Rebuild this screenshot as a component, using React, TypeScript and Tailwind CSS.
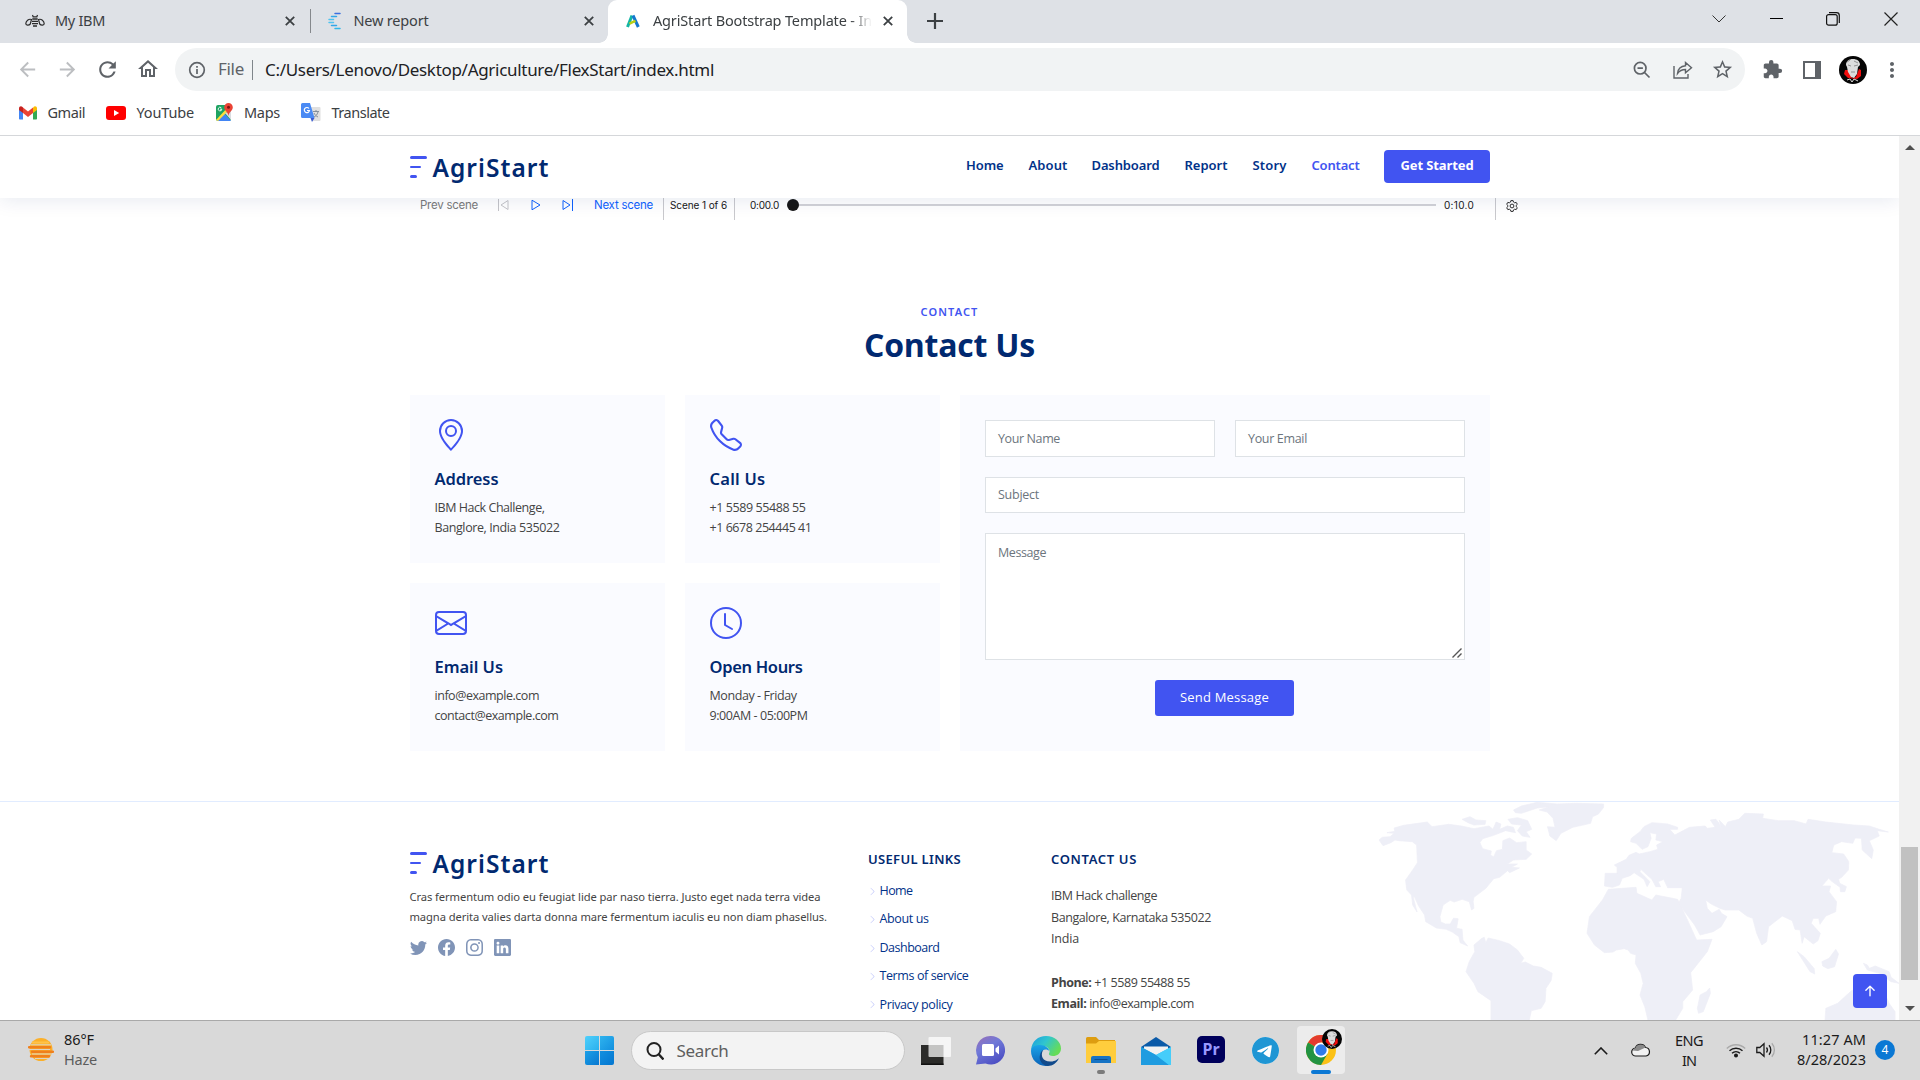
import { useLayoutEffect, useRef } from "react";
import type { ReactNode } from "react";
import clsx from "clsx";
import {
  BsGeoAlt, BsTelephone, BsEnvelope, BsClock, BsTwitter, BsFacebook, BsInstagram, BsLinkedin,
  BsChevronRight, BsArrowUpShort, BsTelegram,
} from "react-icons/bs";
import { MdArrowBack, MdArrowForward, MdRefresh, MdOutlineHome, MdExtension, MdStarBorder, MdMoreVert } from "react-icons/md";

/* One line of text, tracked so that it fills the width of its box. */
function Line({ children, className }: { children: ReactNode; className?: string }) {
  const box = useRef<HTMLSpanElement>(null);
  const text = useRef<HTMLSpanElement>(null);
  useLayoutEffect(() => {
    const b = box.current;
    const t = text.current;
    if (!b || !t) return;
    t.style.letterSpacing = "0px";
    const n = (t.textContent ?? "").length;
    const gap = b.getBoundingClientRect().width - t.getBoundingClientRect().width;
    t.style.letterSpacing = `${gap / Math.max(1, n)}px`;
  });
  return (
    <span ref={box} className={clsx("block shrink-0 whitespace-nowrap", className)}>
      <span ref={text}>{children}</span>
    </span>
  );
}

function Cross({ className }: { className?: string }) {
  return (
    <svg viewBox="0 0 10 10" className={clsx("h-2.5 w-2.5 shrink-0", className)} fill="none" stroke="#3c4043" strokeWidth="1.8">
      <path d="M.8.8l8.4 8.4M9.2.8L.8 9.2" />
    </svg>
  );
}

function Avatar({ className }: { className?: string }) {
  return (
    <svg viewBox="0 0 28 28" className={clsx("shrink-0", className)}>
      <circle cx="14" cy="14" r="14" fill="#050505" />
      <path d="M6 14l3 0 4 8 4-1 3-8 2 1 0 6-4 3-9-1-4-4z" fill="#f20d0d" />
      <path d="M7 9c0-4 3-6 7-6s7 2 7 6l-2 2-1 7-3 4-3-1-3-5-1-5z" fill="#dcdcdc" />
      <path d="M9 9l3 1M15 10l4-1M12 16h4M8 6l3-2M15 5l4 2" stroke="#888" strokeWidth=".9" />
      <path d="M8 24l3-1 2 3 2-3 4 2" stroke="#ddd" strokeWidth="1" fill="none" />
    </svg>
  );
}

function TabStrip() {
  return (
    <div className="flex h-[43px] shrink-0 bg-[#dee1e6] text-[14.5px] leading-[40px] text-[#3c4043]">
      <div className="flex h-[42px] w-[310px] items-center pl-[25px]">
        <svg viewBox="0 0 20 14" className="h-3.5 w-5 shrink-0" fill="none" stroke="#2b2b2b">
          <path d="M6.500 5.500C3.500 4.500 1 7 .8 9.500c0 2 3 2.300 4.500.5zM13.500 5.500c3-1 5.500 1.500 5.700 4 0 2-3 2.300-4.500.5z" strokeWidth="1.200" />
          <path d="M7.300 5h5.400M7 7.400h6M7 9.700h6M8 12h4" strokeWidth="1.300" />
          <path d="M8.300 3.200L7.500 1M11.700 3.200l.8-2.200M8 2.800h4" strokeWidth="1.200" />
        </svg>
        <Line className="mb-[2px] ml-[10px] w-[50px]">My IBM</Line>
        <Cross className="ml-[180px]" />
      </div>
      <div className="flex h-[42px] w-[298px] items-center">
        <div className="h-6 w-px bg-[#85888c]" />
        <svg viewBox="0 0 14 18" className="ml-[17px] h-[18px] w-3.5 shrink-0" fill="none" strokeWidth="1.500" strokeLinecap="round">
          <path d="M7 1.500h5" stroke="#3b6fe0" /><path d="M3.500 4.500h5" stroke="#31a6e8" /><path d="M1 7.500h4.500" stroke="#4fc3f0" />
          <path d="M1 10.500h4.500" stroke="#4fc3f0" /><path d="M3.500 13.500h5" stroke="#31a6e8" /><path d="M7 16.500h5" stroke="#31b6e8" />
        </svg>
        <Line className="mb-[2px] ml-[11.500px] w-[75px]">New report</Line>
        <Cross className="ml-[155px]" />
      </div>
      <div className="relative flex h-[43px] w-[299px] items-center rounded-t-[9px] bg-white pb-px pl-[18px]">
        <div className="absolute bottom-0 -left-[9px] h-[9px] w-[9px] bg-[radial-gradient(circle_at_0_0,#dee1e6_8.500px,#fff_9px)]" />
        <div className="absolute -right-[9px] bottom-0 h-[9px] w-[9px] bg-[radial-gradient(circle_at_100%_0,#dee1e6_8.500px,#fff_9px)]" />
        <svg viewBox="0 0 14 14" className="h-3.5 w-3.5 shrink-0" fill="none" strokeWidth="3">
          <path d="M1.500 13L6 1.500" stroke="#13b5a5" /><path d="M7 1.500L12.300 13" stroke="#1377cf" /><path d="M3.500 9.800c3-2 4-2 6-3" stroke="#b9cf17" strokeWidth="2.500" />
        </svg>
        <div className="mb-[2px] ml-[13px] w-[219px] [mask-image:linear-gradient(90deg,#000_90%,transparent)]">
          <Line className="w-[219px]">AgriStart Bootstrap Template - In</Line>
        </div>
        <Cross className="ml-[11px]" />
      </div>
      <svg viewBox="0 0 16 16" className="mt-[13px] ml-5 h-4 w-4 shrink-0" stroke="#3c4043" strokeWidth="2.200"><path d="M8 0v16M0 8h16" /></svg>
      <div className="ml-auto flex h-[37px] items-center pr-[22px]">
        <svg viewBox="0 0 14 8" className="mr-[44px] h-2 w-3.5" fill="none" stroke="#333"><path d="M.5.5L7 7 13.500.5" /></svg>
        <div className="mr-[43px] h-px w-[13px] bg-black" />
        <svg viewBox="0 0 14 14" className="mr-[44px] h-3.5 w-3.5" fill="none" stroke="#111" strokeWidth="1.200">
          <rect x=".6" y="2.600" width="10.600" height="10.600" rx="2" /><path d="M3 .7h7.500a2.800 2.800 0 012.800 2.800V11" />
        </svg>
        <svg viewBox="0 0 14 14" className="h-3.5 w-3.5" stroke="#222" strokeWidth="1.200"><path d="M.5.5l13 13M13.500.5l-13 13" /></svg>
      </div>
    </div>
  );
}

function Toolbar() {
  return (
    <div className="flex h-[53px] shrink-0 items-center pl-[16px] text-[17px] text-[#5f6368]">
      <MdArrowBack className="h-[23px] w-[23px] text-[#bcbec1]" />
      <MdArrowForward className="ml-[17px] h-[23px] w-[23px] text-[#bcbec1]" />
      <MdRefresh className="ml-[16px] h-[25px] w-[25px]" />
      <MdOutlineHome className="mb-px ml-[15.500px] h-[24px] w-[24px]" />
      <div className="ml-[15.500px] flex h-[43px] w-[1570px] items-center rounded-full bg-[#f1f3f4] pl-[13px]">
        <svg viewBox="0 0 18 18" className="h-[18px] w-[18px]" fill="none" stroke="#5f6368" strokeWidth="1.700">
          <circle cx="9" cy="9" r="7.300" /><path d="M9 8v5M9 5v1.800" />
        </svg>
        <Line className="mb-px ml-[12px] w-[26px]">File</Line>
        <div className="ml-[8px] h-5 w-px bg-[#80868b]" />
        <Line className="ml-[12px] w-[449px] text-[#202124]">C:/Users/Lenovo/Desktop/Agriculture/FlexStart/index.html</Line>
        <svg viewBox="0 0 18 18" className="ml-auto h-[18px] w-[18px]" fill="none" stroke="#5f6368" strokeWidth="1.700">
          <circle cx="7.200" cy="7.200" r="5.800" /><path d="M11.500 11.500l5 5M4.500 7.200h5.400" />
        </svg>
        <svg viewBox="0 0 20 18" className="ml-[22px] h-[18px] w-5" fill="none" stroke="#5f6368" strokeWidth="1.400">
          <path d="M1 5v12h14v-4" /><path d="M4.500 12.500C5 7.500 8 5.200 12.500 4.800V1.500l6 5.200-6 5.100V8.500c-3.500 0-6 1.200-8 4z" />
        </svg>
        <MdStarBorder className="mr-[11px] ml-[18px] h-[23px] w-[23px]" />
      </div>
      <MdExtension className="ml-[17px] h-[21px] w-[21px]" />
      <div className="ml-[20px] h-[18px] w-[18px] border-2 border-r-[6px] border-[#5f6368]" />
      <Avatar className="ml-[18px] h-7 w-7" />
      <MdMoreVert className="ml-[13px] h-6 w-6" />
    </div>
  );
}

function Bookmarks() {
  return (
    <div className="flex h-[40px] shrink-0 items-center border-b border-[#d5d7da] pb-[6px] pl-[19px] text-[14.5px] leading-[24px] text-[#3c4043]">
      <svg viewBox="0 0 18 14" className="h-3.5 w-[18px] shrink-0">
        <path d="M0 2v10.500c0 .6.500 1 1 1h3V6z" fill="#4285f4" /><path d="M18 2v10.500c0 .6-.5 1-1 1h-3V6z" fill="#34a853" />
        <path d="M14 2v5l4-3V2.500C18 .5 16-.3 14.500 1z" fill="#fbbc04" /><path d="M4 7V1.500l5 4 5-4V7l-5 4z" fill="#ea4335" /><path d="M0 4l4 3V1.500L3.500 1C2-.3 0 .5 0 2.500z" fill="#c5221f" />
      </svg>
      <Line className="mb-px ml-[10.500px] w-[37.500px]">Gmail</Line>
      <svg viewBox="0 0 20 14" className="ml-[21px] h-3.5 w-5 shrink-0"><rect width="20" height="14" rx="3" fill="#f00" /><path d="M8 4l5.200 3L8 10z" fill="#fff" /></svg>
      <Line className="mb-px ml-[10.500px] w-[57.500px]">YouTube</Line>
      <svg viewBox="0 0 19 19" className="ml-[21px] h-[19px] w-[19px] shrink-0">
        <rect x="1" y="2" width="15" height="16" rx="2" fill="#1ea362" /><path d="M2 18L9 10l7 8z" fill="#4285f4" /><path d="M1 17L14 3l2 2L3 18z" fill="#fddd3a" />
        <path d="M10 10l6 7V8z" fill="#dadce0" /><path d="M13.500 0a4.300 4.300 0 00-4.300 4.300C9.200 8 13 8.500 13.500 13c.5-4.500 4.300-5 4.300-8.700A4.300 4.300 0 0013.500 0z" fill="#ea4335" /><circle cx="13.500" cy="4.300" r="1.500" fill="#811411" />
        <path d="M6.300 4.800a1.800 1.800 0 10.500 1.400H5" fill="none" stroke="#fff" strokeWidth=".9" />
      </svg>
      <Line className="mb-px ml-[10px] w-[36px]">Maps</Line>
      <svg viewBox="0 0 20 19" className="ml-[21px] h-[19px] w-5 shrink-0">
        <path d="M7 4h11.500a1 1 0 011 1v12a1 1 0 01-1 1H11z" fill="#e0e0e0" /><path d="M1.500 0H9l4.500 15H1.500A1.500 1.500 0 010 13.500v-12A1.500 1.500 0 011.500 0z" fill="#4a8af4" /><path d="M9.500 15h4L11 19z" fill="#3a5bd0" />
        <path d="M8 5.500a2.600 2.600 0 10.500 2H6" fill="none" stroke="#fff" strokeWidth="1.200" /><path d="M12 8.500h6M15 7v1.500M17 9c-1 3-2 4-4 5M13 10c1 2 2 3 4 4" fill="none" stroke="#7b8794" strokeWidth=".9" />
      </svg>
      <Line className="mb-px ml-[10.500px] w-[58px]">Translate</Line>
    </div>
  );
}

function Logo() {
  return (
    <div className="flex items-start font-['Noto_Sans']">
      <div className="flex w-[18px] flex-col gap-[7px] pt-px">
        <div className="h-[2.500px] w-[17px] rounded-full bg-[#4154f1]" />
        <div className="h-[2.500px] w-[11px] rounded-full bg-[#4154f1]" />
        <div className="h-[2.500px] w-[7px] rounded-full bg-[#4154f1]" />
      </div>
      <Line className="ml-[5px] w-[117px] text-[24.500px] leading-[25px] font-semibold text-[#012970]">AgriStart</Line>
    </div>
  );
}

function SiteHeader() {
  return (
    <header className="relative z-10 flex h-[62px] shrink-0 bg-white pl-[409.500px] font-['Noto_Sans'] text-[13px] font-semibold text-[#013289] shadow-[0_2px_20px_rgba(1,41,112,0.1)]">
      <div className="w-[556.500px] pt-[19px]"><Logo /></div>
      <nav className="flex h-[59px] items-center">
        <Line className="w-[37.500px]">Home</Line>
        <Line className="ml-[25px] w-[39px]">About</Line>
        <Line className="ml-[24px] w-[68px]">Dashboard</Line>
        <Line className="ml-[25px] w-[43px]">Report</Line>
        <Line className="ml-[25px] w-[34px]">Story</Line>
        <Line className="ml-[25px] w-[48px] text-[#4154f1]">Contact</Line>
        <button className="mt-[2px] ml-[24.500px] flex h-[33px] w-[106px] items-center justify-center rounded bg-[#4154f1] pb-[2px] font-bold text-white">
          <Line className="w-[73px]">Get Started</Line>
        </button>
      </nav>
    </header>
  );
}

function SceneBar() {
  return (
    <div className="flex h-[22px] shrink-0 items-start pl-[420px] font-['Inter'] text-[11.500px] leading-[15px] text-[#161616]">
      <Line className="w-[58px] text-[#7a7a7a]">Prev scene</Line>
      <svg viewBox="0 0 12 12" className="mt-px ml-[19px] h-3 w-3" fill="none" stroke="#c4c4c8"><path d="M1.500 0v12M11 1.500v9L4 6z" /></svg>
      <svg viewBox="0 0 10 12" className="mt-px ml-[22px] h-3 w-2.5" fill="none" stroke="#0f62fe"><path d="M1 1.200v9.600L9 6z" /></svg>
      <svg viewBox="0 0 12 12" className="mt-px ml-[21px] h-3 w-3" fill="none" stroke="#0f62fe"><path d="M10.500 0v12M1 1.500v9L8 6z" /></svg>
      <Line className="ml-[20px] w-[59px] text-[#0f62fe]">Next scene</Line>
      <div className="ml-[10px] h-[22px] w-px bg-[#c9c9cd]" />
      <Line className="ml-[6px] w-[57px] text-[10px] leading-[14px]">Scene 1 of 6</Line>
      <div className="ml-[7px] h-[22px] w-px bg-[#c9c9cd]" />
      <Line className="ml-[15px] w-[29px] text-[10px] leading-[14px]">0:00.0</Line>
      <div className="mt-px ml-[8px] h-3 w-3 rounded-full bg-[#161616]" />
      <div className="mt-[6px] h-[2px] w-[637px] bg-[#d2d2d7]" />
      <Line className="ml-[8px] w-[30px] text-[10px] leading-[14px]">0:10.0</Line>
      <div className="ml-[21px] h-[22px] w-px bg-[#c9c9cd]" />
      <svg viewBox="0 0 12 12" className="mt-[2px] ml-[10px] h-3 w-3" fill="none" stroke="#161616" strokeWidth=".9">
        <path d="M4.900.6h2.200l.4 1.500 1.200.7 1.500-.4 1.100 1.900L10.200 5.300v1.400l1.100 1-1.100 1.900-1.500-.4-1.200.7-.4 1.500H4.900l-.4-1.500-1.200-.7-1.500.4L.7 7.700l1.100-1V5.300L.7 4.300l1.100-1.900 1.500.4 1.200-.7z" /><circle cx="6" cy="6" r="1.900" />
      </svg>
    </div>
  );
}

function InfoCard({ icon, title, children }: { icon: ReactNode; title: ReactNode; children: ReactNode }) {
  return (
    <div className="h-[168px] w-[255px] bg-[#fafbff] pt-[24px] pl-[24.500px] text-[12.500px] leading-[20px] text-[#444]">
      <div className="text-[32px] text-[#4154f1]">{icon}</div>
      <div className="mt-[18px] mb-[9px] font-['Noto_Sans'] text-[16.500px] leading-[20px] font-semibold text-[#012970]">{title}</div>
      {children}
    </div>
  );
}

function Field({ className, children }: { className?: string; children: ReactNode }) {
  return <div className={clsx("flex border border-[#dee2e6] bg-white pl-[12px] text-[12.500px] text-[#6c757d]", className)}>{children}</div>;
}

function ContactSection() {
  return (
    <section className="flex shrink-0 flex-col pt-[82px] pl-[410px]">
      <div className="flex w-[1080px] flex-col items-center font-['Noto_Sans']">
        <Line className="-ml-px w-[58px] text-[11px] leading-[20px] font-semibold text-[#4154f1]">CONTACT</Line>
        <Line className="mt-[3px] -ml-px w-[171px] font-['Open_Sans'] text-[32px] leading-[40px] font-bold text-[#012970]">Contact Us</Line>
      </div>
      <div className="mt-[30px] flex gap-5">
        <div className="grid grid-cols-[255px_255px] gap-5">
          <InfoCard icon={<BsGeoAlt />} title={<Line className="w-[64px]">Address</Line>}>
            <Line className="w-[110px]">IBM Hack Challenge,</Line>
            <Line className="w-[125px]">Banglore, India 535022</Line>
          </InfoCard>
          <InfoCard icon={<BsTelephone />} title={<Line className="w-[56px]">Call Us</Line>}>
            <Line className="w-[96px]">+1 5589 55488 55</Line>
            <Line className="w-[102px]">+1 6678 254445 41</Line>
          </InfoCard>
          <InfoCard icon={<BsEnvelope />} title={<Line className="w-[68.500px]">Email Us</Line>}>
            <Line className="w-[104.500px]">info@example.com</Line>
            <Line className="w-[124px]">contact@example.com</Line>
          </InfoCard>
          <InfoCard icon={<BsClock />} title={<Line className="w-[93px]">Open Hours</Line>}>
            <Line className="w-[87px]">Monday - Friday</Line>
            <Line className="w-[98px]">9:00AM - 05:00PM</Line>
          </InfoCard>
        </div>
        <div className="flex h-[356px] w-[530px] flex-col items-center gap-5 bg-[#fafbff] pt-[25px]">
          <div className="flex gap-5">
            <Field className="h-[37px] w-[230px] items-center pt-px"><Line className="w-[62px]">Your Name</Line></Field>
            <Field className="h-[37px] w-[230px] items-center pt-px"><Line className="w-[59px]">Your Email</Line></Field>
          </div>
          <Field className="h-[36px] w-[480px] items-center"><Line className="w-[41px]">Subject</Line></Field>
          <Field className="h-[127px] w-[480px] items-start justify-between">
            <Line className="mt-[10px] w-[48px] leading-[18px]">Message</Line>
            <svg viewBox="0 0 10 10" className="mr-[2px] mb-px h-2.5 w-2.5 self-end" stroke="#555" strokeWidth="1.400"><path d="M.5 9.500l9-9M5.500 9.500l4-4" /></svg>
          </Field>
          <button className="mr-px flex h-[36px] w-[139px] items-center justify-center rounded-[3px] bg-[#4154f1] text-[13px] text-white"><Line className="w-[89px]">Send Message</Line></button>
        </div>
      </div>
    </section>
  );
}

function WorldMap() {
  return (
    <svg viewBox="0 36 1515 654" preserveAspectRatio="none" className="absolute right-0 bottom-0 h-[218px] w-[599px]" fill="#eeeff7" stroke="#eeeff7" strokeWidth="2" strokeLinejoin="round">
      <path d="M200 150L208 142 228 140 238 130 220 128 240 124 238 114 262 106 322 96 334 110 376 103 408 108 440 116 478 108 488 118 496 96 508 102 505 118 524 108 540 112 545 128 520 122 490 136 462 146 455 158 462 176 484 183 482 196 490 200 497 182 512 178 513 152 530 144 548 158 572 155 572 180 586 192 572 208 540 210 524 222 550 222 535 232 555 234 530 248 525 242 505 262 490 266 470 295 440 322 438 335 440 355 434 360 428 335 410 328 390 336 380 331 362 345 354 380 356 396 368 402 380 402 388 385 400 386 396 415 410 418 412 450 424 468 405 458 402 440 385 426 370 418 345 414 318 395 315 375 300 348 290 322 286 320 296 366 285 345 282 315 270 300 267 270 285 240 297 218 295 165 284 155 250 152 240 150 230 158 210 167Z" />
      <path d="M526 88L550 83 576 92 586 118 572 125 582 142 562 138 550 122 560 105 535 102Z" />
      <path d="M410 88L430 80 445 90 470 92 468 103 440 105 425 98Z" />
      <path d="M540 60L560 48 600 37 650 42 700 40 768 42 768 52 755 72 740 80 735 100 690 112 660 130 648 152 632 138 626 110 645 112 640 85 625 66 605 60 630 50 600 54 560 70 545 68Z" />
      <path d="M440 465L460 445 466 442 470 458 476 444 505 452 530 462 550 480 566 505 558 520 570 516 590 528 610 532 638 550 635 572 622 595 620 635 610 655 585 662 580 690 483 690 483 632 450 605 440 580 420 545 428 515 442 485Z" />
      <path d="M780 298L850 292 852 310 890 330 900 315 955 328 962 345 980 390 1003 450 1042 448 1030 485 988 548 993 600 968 635 968 655 950 690 880 690 872 650 860 615 868 580 862 550 848 520 850 495 836 490 830 480 820 476 800 480 792 486 770 488 745 465 726 430 732 380 765 330Z" />
      <path d="M1036 594L1038 610 1020 665 1008 670 1005 655 1012 615 1028 605Z" />
      <path d="M772 250L802 250 802 232 795 225 825 208 832 196 850 187 858 192 885 185 905 178 902 165 918 155 900 150 902 132 885 128 888 145 880 170 865 178 850 160 836 155 838 145 860 125 870 110 890 98 930 102 955 112 955 118 935 118 948 135 985 112 1025 108 1030 115 1050 112 1038 90 1052 88 1060 100 1066 117 1060 90 1076 110 1082 96 1110 88 1125 70 1172 72 1170 85 1210 92 1250 92 1280 102 1285 88 1330 96 1400 105 1440 108 1465 118 1488 126 1460 122 1465 138 1440 152 1450 180 1446 206 1422 180 1420 145 1404 144 1398 160 1370 155 1350 165 1345 188 1375 192 1388 215 1387 240 1370 262 1362 268 1365 280 1382 290 1378 305 1367 305 1366 292 1345 274 1337 265 1320 288 1342 288 1338 305 1357 335 1355 365 1330 378 1315 403 1312 385 1298 385 1293 400 1316 430 1310 452 1298 462 1275 440 1270 460 1265 420 1252 418 1245 392 1220 378 1185 410 1180 455 1168 465 1155 430 1145 385 1130 378 1110 360 1075 360 1062 355 1040 342 1026 330 1030 355 1042 370 1060 358 1066 370 1080 380 1065 410 1045 425 1012 435 998 405 957 340 964 325 967 293 930 293 920 268 906 275 912 290 900 290 890 268 862 238 860 245 885 275 878 290 870 268 845 248 835 257 815 265 808 285 790 292 770 288Z" />
      <path d="M1258 485L1275 500 1300 535 1302 552 1290 545Z" />
      <path d="M1320 515L1338 505 1355 478 1362 492 1352 530 1335 536 1322 528Z" />
      <path d="M1425 520L1435 525 1440 535 1455 528 1490 545 1495 562 1515 580 1495 575 1465 550 1435 540Z" />
      <path d="M1328 690L1330 655 1360 640 1395 602 1420 590 1475 600 1490 640 1505 665 1505 690Z" />
    </svg>
  );
}

function FooterLink({ children }: { children: ReactNode }) {
  return (
    <div className="flex h-[28.400px] items-center">
      <BsChevronRight className="mr-[2.500px] h-[9px] w-[9px] text-[#bcc3fa]" />
      {children}
    </div>
  );
}

function SiteFooter() {
  return (
    <footer className="relative mt-[50px] h-[219px] shrink-0 border-t border-[#e1ecff] text-[12.500px] text-[#444]">
      <WorldMap />
      <div className="relative flex pl-[409.500px]">
        <div className="w-[458.500px] pt-[49px]">
          <Logo />
          <div className="mt-[11px] font-['Noto_Sans'] text-[11.200px] leading-[20px]">
            <Line className="w-[411px]">Cras fermentum odio eu feugiat lide par naso tierra. Justo eget nada terra videa</Line>
            <Line className="w-[417.500px]">magna derita valies darta donna mare fermentum iaculis eu non diam phasellus.</Line>
          </div>
          <div className="mt-[12px] flex gap-[11px] text-[17px] text-[#8094b7]">
            <BsTwitter /><BsFacebook /><BsInstagram /><BsLinkedin />
          </div>
        </div>
        <div className="w-[183px] pt-[47px] text-[#013289]">
          <Line className="w-[93px] font-['Noto_Sans'] text-[13px] leading-[20px] font-semibold text-[#012970]">USEFUL LINKS</Line>
          <div className="pt-[8.200px]">
            <FooterLink><Line className="w-[33px]">Home</Line></FooterLink>
            <FooterLink><Line className="w-[49px]">About us</Line></FooterLink>
            <FooterLink><Line className="w-[60px]">Dashboard</Line></FooterLink>
            <FooterLink><Line className="w-[89px]">Terms of service</Line></FooterLink>
            <FooterLink><Line className="w-[73px]">Privacy policy</Line></FooterLink>
          </div>
        </div>
        <div className="pt-[47px] leading-[21.600px]">
          <Line className="mb-[16.300px] w-[86px] font-['Noto_Sans'] text-[13px] leading-[20px] font-semibold text-[#012970]">CONTACT US</Line>
          <Line className="w-[106px]">IBM Hack challenge</Line>
          <Line className="w-[160px]">Bangalore, Karnataka 535022</Line>
          <Line className="mb-[21.600px] w-[28px]">India</Line>
          <Line className="w-[139px]"><b>Phone:</b> +1 5589 55488 55</Line>
          <Line className="w-[143px]"><b>Email:</b> info@example.com</Line>
        </div>
      </div>
      <div className="absolute right-[12px] bottom-[12px] flex h-[34px] w-[34px] items-center justify-center rounded bg-[#4154f1] text-white">
        <BsArrowUpShort className="h-[22px] w-[22px]" />
      </div>
    </footer>
  );
}

function Scrollbar() {
  return (
    <div className="flex w-[21px] shrink-0 flex-col items-center bg-[#f1f1f1]">
      <svg viewBox="0 0 10 5" className="mt-[9px] h-[5px] w-2.5" fill="#505050"><path d="M0 5L5 0l5 5z" /></svg>
      <div className="mt-[697px] h-[133px] w-[17px] bg-[#c1c1c1]" />
      <svg viewBox="0 0 10 5" className="mt-[26px] h-[5px] w-2.5" fill="#505050"><path d="M0 0l5 5 5-5z" /></svg>
    </div>
  );
}

function Taskbar() {
  return (
    <div className="flex h-[60px] shrink-0 items-center border-t border-[#a9a9a9] bg-[#d9d9d9] text-[14.500px] leading-[20px] text-[#1b1b1b]">
      <svg viewBox="0 0 26 26" className="mb-px ml-[28px] h-[26px] w-[26px] shrink-0">
        <circle cx="13" cy="12.500" r="11.500" fill="#fbb02a" /><path d="M3 7.800h20M0 12.500h22M4 17h22M7 21.500h14" stroke="#d9d9d9" strokeWidth=".9" />
        <path d="M1 10.200h21M4 14.800h21M3 19.300h18" stroke="#f0801c" strokeWidth="2.400" strokeLinecap="round" /><path d="M5 5.500h15" stroke="#ffc34a" strokeWidth="2.200" strokeLinecap="round" />
      </svg>
      <div className="mb-[4px] ml-[10px] w-[521px]">
        <Line className="w-[30px]">86°F</Line>
        <Line className="w-[33px] text-[#5c5c5c]">Haze</Line>
      </div>
      <div className="grid h-[29px] w-[29px] shrink-0 grid-cols-2 gap-px">
        <div className="rounded-tl-[2px] bg-gradient-to-br from-[#4fd0fb] to-[#28b0ee]" /><div className="rounded-tr-[2px] bg-gradient-to-br from-[#2eb3ee] to-[#1290df]" />
        <div className="rounded-bl-[2px] bg-gradient-to-br from-[#1ba0e8] to-[#0a78d0]" /><div className="rounded-br-[2px] bg-gradient-to-br from-[#1490e0] to-[#0476d0]" />
      </div>
      <div className="ml-[17px] flex h-[39px] w-[274px] shrink-0 items-center rounded-full border border-[#c8c8c8] bg-[#f3f3f3] pl-[14px] text-[17px] text-[#5e5e5e]">
        <svg viewBox="0 0 18 18" className="h-[18px] w-[18px]" fill="none" stroke="#222" strokeWidth="2"><circle cx="8" cy="7.500" r="6.500" /><path d="M12.500 12l5 5.500" strokeWidth="2.400" /></svg>
        <Line className="ml-[12.500px] w-[52px]">Search</Line>
      </div>
      <svg viewBox="0 0 30 30" className="ml-[16px] h-[30px] w-[30px] shrink-0">
        <path d="M0 9h22.500v20H0z" fill="#2b2b29" /><rect x="7.500" y="1" width="22.500" height="20" rx="1" fill="#fff" opacity=".72" /><path d="M0 27.500h22.500V29H0z" fill="#111" />
      </svg>
      <svg viewBox="0 0 29 29" className="ml-[25px] h-[29px] w-[29px] shrink-0">
        <defs><linearGradient id="chat" x1="0" y1="0" x2=".6" y2="1"><stop stopColor="#9a6fb5" /><stop offset=".45" stopColor="#7079d8" /><stop offset="1" stopColor="#4d50c4" /></linearGradient></defs>
        <path d="M14.500 0a14.300 14.300 0 11-5 27.600L0 28.500l1.800-7.300A14.300 14.300 0 0114.500 0z" fill="url(#chat)" />
        <rect x="6" y="8" width="12" height="12" rx="1.500" fill="#fff" /><path d="M19.500 12.500l3.500-3v9l-3.500-3z" fill="#fff" />
      </svg>
      <svg viewBox="0 0 30 30" className="ml-[26px] h-[30px] w-[30px] shrink-0">
        <defs>
          <linearGradient id="edgeTop" x1="0" y1="0" x2="1" y2=".5"><stop stopColor="#1a9be0" /><stop offset=".5" stopColor="#30c5cf" /><stop offset="1" stopColor="#66dc58" /></linearGradient>
          <linearGradient id="edgeLeft" x1="0" y1="0" x2="0" y2="1"><stop stopColor="#1ba4e8" /><stop offset="1" stopColor="#0a62b8" /></linearGradient>
        </defs>
        <path d="M0 14C1 5 7 0 15 0c9 0 15 6 15 12.500 0 5-4 7.500-8 7.500-3 0-4.500-1.300-4-2.500 2-3-1-7.500-6-7.500C6 10 1 12 0 14z" fill="url(#edgeTop)" />
        <path d="M0 15c0-4 4-6 9-6 5 0 9 3 9.300 6-3-3-8-1.500-8.300 3.500C9.700 24 14 29 19 29.500 9 32 0 25 0 15z" fill="url(#edgeLeft)" />
        <path d="M12 14c-3 6 0 12 8 11.500 4 0 7-2.500 8-3.500-2 4.500-6 8-11.500 8C11 29 7.500 24 9 19c.5-2.500 1.500-4 3-5z" fill="#114a8b" />
      </svg>
      <div className="ml-[25px] flex h-[50px] w-[30px] shrink-0 flex-col items-center pt-[11px]">
        <svg viewBox="0 0 30 27" className="h-[27px] w-[30px] shrink-0">
          <path d="M0 1.500A1.500 1.500 0 011.500 0H10l3 3H29v8H0z" fill="#dd9d10" /><path d="M0 6.500h10L13 4h17v22H0z" fill="#ffcd3d" /><path d="M5 26v-5a2 2 0 012-2h16a2 2 0 012 2v5z" fill="#1673c4" /><path d="M8.500 22.500h13" stroke="#0b4f91" />
        </svg>
        <div className="mt-[6px] h-1 w-2 shrink-0 rounded-full bg-[#7b7b7b]" />
      </div>
      <svg viewBox="0 0 30 28" className="ml-[25px] h-7 w-[30px] shrink-0">
        <path d="M0 10L15 0l15 10v3H0z" fill="#0a5aa8" /><path d="M3 9.500h24v9L15 24 3 18z" fill="#f2f2f2" /><path d="M0 10l15 8 15-8v18H0z" fill="#35bdf2" /><path d="M0 10v18h28L15 18z" fill="#1f9ce0" /><path d="M15 18l13 10h2V10z" fill="#45cdfa" />
      </svg>
      <div className="mb-[3px] ml-[26px] flex h-[27px] w-[28px] shrink-0 items-center justify-center rounded-[5px] bg-[#00005b] pb-px font-['Noto_Sans'] text-[16px] font-bold text-[#9999ff]"><Line className="w-[17px]">Pr</Line></div>
      <div className="ml-[27px] h-[27px] w-[27px] shrink-0 rounded-full bg-white text-[27px] text-[#1f96d4]"><BsTelegram /></div>
      <div className="relative mt-[-1px] ml-[18px] flex h-12 w-12 shrink-0 items-center justify-center rounded bg-[#ececec]">
        <svg viewBox="0 0 30 30" className="h-[30px] w-[30px]">
          <circle cx="15" cy="15" r="15" fill="#fbc116" /><path d="M15 15L2 7.500A15 15 0 0128 7.500H15z" fill="#e33b2e" /><path d="M2 7.500A15 15 0 0015 30l6.500-11.200L15 15z" fill="#229342" />
          <circle cx="15" cy="15" r="7.500" fill="#fff" /><circle cx="15" cy="15" r="5.700" fill="#2f7bea" />
        </svg>
        <Avatar className="absolute top-[3px] right-[3px] h-5 w-5" />
        <div className="absolute bottom-0 left-[14px] h-1 w-5 rounded-full bg-[#0b78d4]" />
      </div>
      <svg viewBox="0 0 14 8" className="ml-auto h-2 w-3.5 shrink-0" fill="none" stroke="#1b1b1b" strokeWidth="1.600"><path d="M.8 7.200L7 1l6.200 6.200" /></svg>
      <svg viewBox="0 0 20 14" className="mb-[2px] ml-[23px] h-3.5 w-5 shrink-0" stroke="#1b1b1b" strokeWidth="1.200"><path d="M5 13a4 4 0 01-.6-8A5.500 5.500 0 0114.500 4.500 4.300 4.300 0 0115 13z" fill="#f2f2f2" /><path d="M1.500 7.500L4.400 5A5.500 5.500 0 0114.500 4.500L7 8z" fill="#8a8a8a" stroke="none" /></svg>
      <div className="mb-[2px] ml-[24px] flex w-[28px] shrink-0 flex-col items-center"><Line className="w-[28px]">ENG</Line><Line className="w-[14px]">IN</Line></div>
      <svg viewBox="0 0 20 16" className="mb-[2px] ml-[23px] h-4 w-5 shrink-0" fill="none" stroke="#1b1b1b" strokeWidth="1.400">
        <path d="M.8 6.500a13 13 0 0118.400 0" stroke="#aaa" /><path d="M3.500 8.800a9.500 9.500 0 0113 0M6 11.200a6 6 0 018 0" /><circle cx="10" cy="13.600" r="1.300" fill="#1b1b1b" />
      </svg>
      <svg viewBox="0 0 20 16" className="mb-[2px] ml-[10px] h-4 w-5 shrink-0" fill="none" stroke="#1b1b1b" strokeWidth="1.300">
        <path d="M.8 5.500h3L8 1.800v12.400L3.800 10.500h-3zM10.500 5.500a4 4 0 010 5M13 3.300a7 7 0 010 9.400" /><path d="M15.800 1.300a10 10 0 010 13.400" stroke="#aaa" />
      </svg>
      <div className="mb-[4px] ml-[21px] flex w-[69px] shrink-0 flex-col items-end"><Line className="w-[64px]">11:27 AM</Line><Line className="w-[69px]">8/28/2023</Line></div>
      <div className="mr-[25px] mb-[2px] ml-[9px] flex h-5 w-5 shrink-0 items-center justify-center rounded-full bg-[#0b78d4] text-[12px] text-white">4</div>
    </div>
  );
}

export default function App() {
  return (
    <div className="flex h-[1080px] w-[1920px] flex-col overflow-hidden bg-white font-['Noto_Sans',sans-serif]">
      <TabStrip />
      <Toolbar />
      <Bookmarks />
      <div className="flex h-[884px] shrink-0">
        <main className="flex w-[1899px] shrink-0 flex-col overflow-hidden font-['Open_Sans']">
          <SiteHeader />
          <SceneBar />
          <ContactSection />
          <SiteFooter />
        </main>
        <Scrollbar />
      </div>
      <Taskbar />
    </div>
  );
}
